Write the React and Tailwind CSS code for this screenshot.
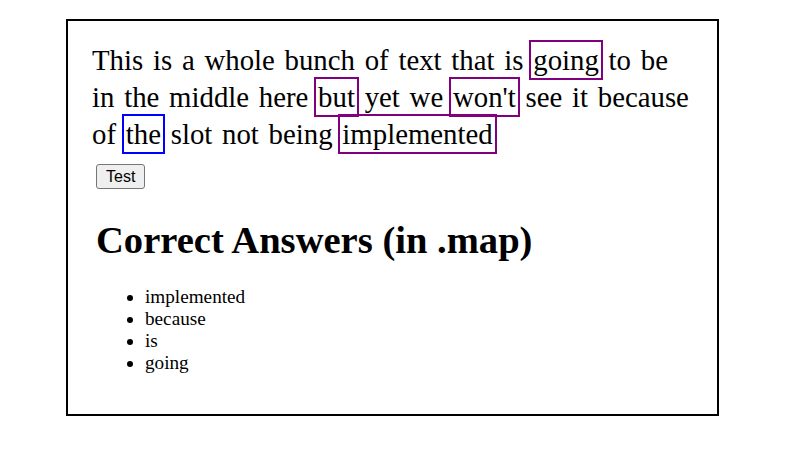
export default function App() {
  const serif = { fontFamily: '"Liberation Serif", "Times New Roman", serif' };
  const box = "outline-2 outline-offset-2 outline-[#800080]";
  return (
    <div className="w-[785px] flex justify-center bg-white" style={serif}>
      <div className="w-[653px] mt-[19px] border-2 border-black pt-[21px] px-[24px] pb-[40px] text-black">
        <p className="text-[28.8px] leading-[37px] m-0 [word-spacing:2.55px]">
          This is a whole bunch of text that is <span className={box}>going</span> to be in the middle here{" "}
          <span className={box}>but</span> yet we <span className={box}>won't</span> see it because of{" "}
          <span className="outline-2 outline-offset-2 outline-[#0000ff]">the</span> slot not being{" "}
          <span className={box}>implemented</span>
        </p>
        <div className="ml-[4px]">
          <button
            className="mt-[11px] h-[25px] px-[9px] border border-[#767676] rounded-[3px] bg-[#efefef] text-[16px] leading-[18px] text-black"
            style={{ fontFamily: '"Liberation Sans", Arial, sans-serif' }}
          >
            Test
          </button>
          <h1 className="mt-[29px] text-[38.6px] font-bold leading-[44px]">Correct Answers (in .map)</h1>
          <ul className="mt-[24px] ml-[9px] pl-[40px] list-disc text-[19.2px] leading-[22px]">
            <li>implemented</li>
            <li>because</li>
            <li>is</li>
            <li>going</li>
          </ul>
        </div>
      </div>
    </div>
  );
}
